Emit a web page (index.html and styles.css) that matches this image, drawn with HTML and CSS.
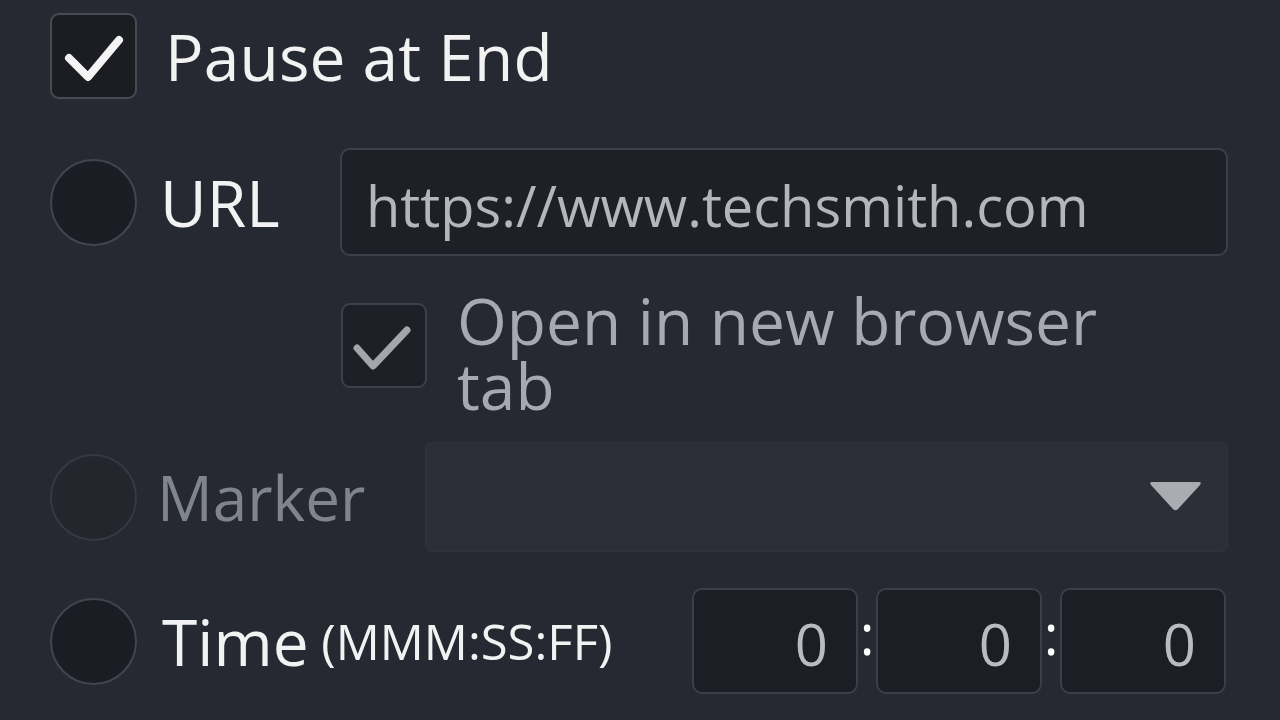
FILE: index.html
```html
<!DOCTYPE html>
<html lang="en">
<head>
<meta charset="utf-8">
<title>Link options</title>
<link rel="stylesheet" href="styles.css">
</head>
<body>
<div class="panel">
  <div class="row row-pause">
    <span class="box checked">
      <svg viewBox="0 0 86 86" width="86" height="86"><polyline points="18,45 37,64 68,27" fill="none" stroke="#f4f4f4" stroke-width="8" stroke-linecap="round" stroke-linejoin="round"/></svg>
    </span>
    <span class="label label-pause">Pause at End</span>
  </div>

  <div class="row row-url">
    <span class="radio"></span>
    <span class="label label-url">URL</span>
    <div class="input">https://www.techsmith.com</div>
  </div>

  <div class="row row-newtab">
    <span class="box sub">
      <svg viewBox="0 0 86 86" width="86" height="86"><polyline points="16,45 32,63 66,27" fill="none" stroke="#a3a6ac" stroke-width="7" stroke-linecap="round" stroke-linejoin="round"/></svg>
    </span>
    <span class="label label-newtab">Open in new browser tab</span>
  </div>

  <div class="row row-marker">
    <span class="radio disabled"></span>
    <span class="label label-marker">Marker</span>
    <div class="dropdown">
      <svg viewBox="0 0 55 31" width="55" height="31"><path d="M4 2 H51 Q54 2 52 5 L30 29 Q27.5 31.5 25 29 L3 5 Q1 2 4 2 Z" fill="#a9acb1"/></svg>
    </div>
  </div>

  <div class="row row-time">
    <span class="radio"></span>
    <span class="label label-time">Time <span class="hint">(MMM:SS:FF)</span></span>
    <div class="timefields">
      <div class="tbox">0</div>
      <span class="colon">:</span>
      <div class="tbox">0</div>
      <span class="colon">:</span>
      <div class="tbox">0</div>
    </div>
  </div>
</div>
</body>
</html>
```

FILE: styles.css
```css
html, body {
  margin: 0;
  padding: 0;
  background: #262932;
  width: 1280px;
  height: 720px;
  overflow: hidden;
}

.panel {
  display: flex;
  flex-direction: column;
  padding: 13px 52px 0 50px;
  font-family: "Open Sans", "Liberation Sans", sans-serif;
  color: #f2f2f2;
}

.row {
  display: flex;
  align-items: center;
}

.row-pause { height: 86px; margin-bottom: 49px; }
.row-url { height: 108px; margin-bottom: 32px; }
.row-newtab { align-items: flex-start; padding-left: 291px; margin-bottom: 24px; }
.row-marker { height: 110px; margin-bottom: 36px; }
.row-time { height: 106px; }

.box {
  box-sizing: border-box;
  width: 87px;
  height: 86px;
  border-radius: 9px;
  border: 2.5px solid #474a52;
  background: #1b1d23;
  display: flex;
  align-items: center;
  justify-content: center;
  flex: none;
}
.box svg { display: block; flex: none; }
.box.sub {
  width: 86px;
  height: 85px;
  margin-top: 15px;
  border-color: #3d4048;
  background: #1e2027;
}

.radio {
  box-sizing: border-box;
  width: 87px;
  height: 87px;
  border-radius: 50%;
  border: 2.5px solid #42454d;
  background: #1b1d24;
  flex: none;
}
.radio.disabled {
  border-color: #363941;
  background: #23262d;
}

.label {
  font-size: 64px;
  font-weight: 500;
  white-space: nowrap;
}
.label-pause { margin-left: 28px; letter-spacing: 0.2px; }
.label-url { margin-left: 23px; }
.label-newtab {
  margin-left: 30px;
  white-space: normal;
  width: 690px;
  line-height: 65px;
  font-weight: 400;
  color: #a6a9af;
}
.label-marker { margin-left: 20px; font-size: 62px; color: #80848b; }
.label-time { margin-left: 25px; }
.hint {
  font-size: 49px;
  position: relative;
  top: -6px;
  margin-left: -4px;
}

.input {
  box-sizing: border-box;
  margin-left: auto;
  width: 888px;
  height: 108px;
  border: 2px solid #3c3f47;
  border-radius: 10px;
  background: #1e2027;
  padding: 6px 0 0 24px;
  font-size: 56px;
  color: #b3b6bb;
  display: flex;
  align-items: center;
  white-space: nowrap;
}

.dropdown {
  box-sizing: border-box;
  margin-left: auto;
  width: 803px;
  height: 110px;
  border-radius: 6px;
  background: #2c2f37;
  border: 1px solid #30333b;
  display: flex;
  align-items: center;
  justify-content: flex-end;
  padding: 0 24px 4px 0;
}
.dropdown svg { display: block; }

.timefields {
  margin-left: auto;
  margin-right: 2px;
  display: flex;
  align-items: center;
}
.tbox {
  box-sizing: border-box;
  width: 166px;
  height: 106px;
  border: 2px solid #3c3f47;
  border-radius: 10px;
  background: #1c1e25;
  font-size: 58px;
  color: #b8bbc0;
  display: flex;
  align-items: center;
  justify-content: flex-end;
  padding: 4px 28px 0 0;
}
.colon {
  width: 18px;
  text-align: center;
  font-size: 56px;
  color: #ffffff;
  font-weight: 500;
  transform: translateY(-8px);
}
```
